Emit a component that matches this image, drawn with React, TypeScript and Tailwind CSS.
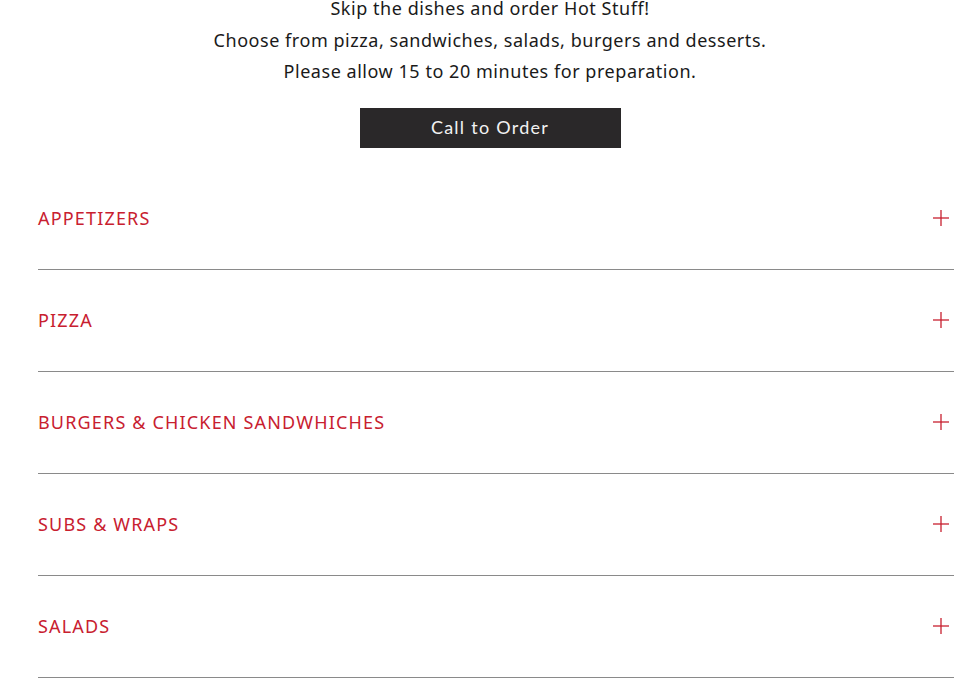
import React from "react";

const sections = [
  "APPETIZERS",
  "PIZZA",
  "BURGERS & CHICKEN SANDWHICHES",
  "SUBS & WRAPS",
  "SALADS",
];

function Plus() {
  return (
    <svg width="18" height="18" viewBox="0 0 18 18" className="shrink-0">
      <line x1="9" y1="1" x2="9" y2="17" stroke="#c8202f" strokeWidth="1.3" />
      <line x1="1" y1="9" x2="17" y2="9" stroke="#c8202f" strokeWidth="1.3" />
    </svg>
  );
}

export default function App() {
  return (
    <div
      className="w-[965px] h-[680px] overflow-hidden bg-white"
      style={{ fontFamily: '"Noto Sans", "Open Sans", sans-serif' }}
    >
      <div className="flex flex-col items-center pl-[15px] -mt-[7px]">
        <div className="text-[18px] leading-[31.5px] text-[#1a1a1a] text-center tracking-[0.03em]">
          <p>Skip the dishes and order Hot Stuff!</p>
          <p>Choose from pizza, sandwiches, salads, burgers and desserts.</p>
          <p>Please allow 15 to 20 minutes for preparation.</p>
        </div>
        <button
          className="mt-[20px] w-[261px] h-[40px] bg-[#2a2829] text-[#f2f2f2] text-[18px] tracking-[0.07em] flex items-center justify-center"
          style={{ fontFamily: 'Lato, "Noto Sans", sans-serif' }}
        >
          Call to Order
        </button>
      </div>
      <div className="mt-[20px] pl-[38px] pr-[11px]">
        {sections.map((s) => (
          <div
            key={s}
            className="h-[102px] flex items-center justify-between border-b border-[#8a8a8a] pr-[4px]"
          >
            <span className="text-[18px] text-[#c8202f] tracking-[0.065em]">{s}</span>
            <Plus />
          </div>
        ))}
      </div>
    </div>
  );
}
